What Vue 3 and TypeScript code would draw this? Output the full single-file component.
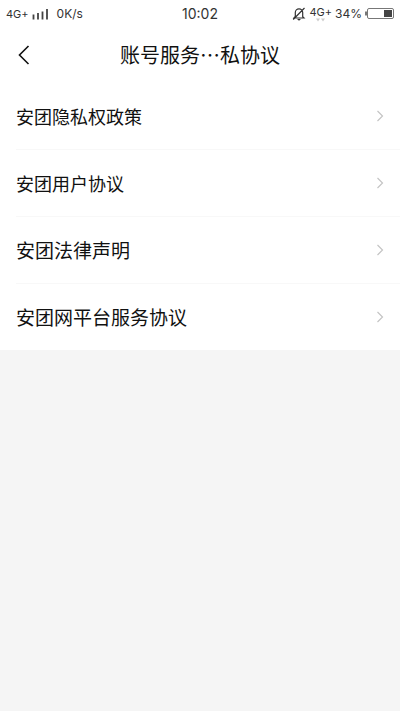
<script setup lang="ts">
interface Agreement {
  id: string
  title: string
  large?: boolean
}

const agreements: Agreement[] = [
  { id: 'privacy', title: '安团隐私权政策' },
  { id: 'user', title: '安团用户协议' },
  { id: 'legal', title: '安团法律声明', large: true },
  { id: 'platform', title: '安团网平台服务协议', large: true },
]
</script>

<template>
  <div class="page">
    <div class="status">
      <div class="status-side">
        <span class="network">4G+</span>
        <svg class="signal" width="17" height="12" viewBox="0 0 17 12" aria-hidden="true">
          <path d="M1.500 6.500v5M6 5v6.500M10.500 3.500v8M15 1v10.500" fill="none" stroke="#444" stroke-width="1.800" />
        </svg>
        <span class="speed">0K/s</span>
      </div>
      <time class="clock">10:02</time>
      <div class="status-side end">
        <svg class="bell" width="14" height="14" viewBox="0 0 14 14" aria-hidden="true">
          <path d="M3.300 9.500V5.500a3.700 3.700 0 0 1 7.400 0v4.200l1.300 1.300H2l1.300-1.500M12.500 1 1.200 12.500" fill="none" stroke="#333" stroke-width="1.200" />
          <path d="M5 12h4l-2 1.800z" fill="#333" />
        </svg>
        <span class="data">
          <span class="network">4G+</span>
          <svg width="10" height="4" viewBox="0 0 10 4" aria-hidden="true">
            <path d="M0 .5h4L2 3.500zM5 .5h4L7 3.500z" fill="#ccc" />
          </svg>
        </span>
        <span class="percent">34%</span>
        <svg class="battery" width="29" height="12" viewBox="0 0 29 12" aria-hidden="true">
          <rect x="2.500" y=".5" width="26" height="10" rx="1.500" fill="#fff" stroke="#777" />
          <path d="M1 3.500v4" stroke="#555" stroke-width="1.600" />
          <path d="M19 2h8v7h-8z" fill="#444" />
        </svg>
      </div>
    </div>

    <header class="header">
      <button class="back" type="button" aria-label="返回">
        <svg width="12" height="20" viewBox="0 0 12 20" aria-hidden="true">
          <path d="M10.500 1 1.500 10l9 9" fill="none" stroke="#111" stroke-width="1.600" />
        </svg>
      </button>
      <h1 class="title">账号服务…私协议</h1>
    </header>

    <nav class="list">
      <a v-for="item in agreements" :key="item.id" class="row" :href="`#${item.id}`">
        <span :class="['label', { large: item.large }]">{{ item.title }}</span>
        <svg width="8" height="12" viewBox="0 0 8 12" aria-hidden="true">
          <path d="M1.500 1l5 5-5 5" fill="none" stroke="#c4c4c4" stroke-width="1.200" />
        </svg>
      </a>
    </nav>
  </div>
</template>

<style>
body {
  background: #f5f5f5;
}
</style>

<style scoped>
.page {
  min-height: 100vh;
  background: #f5f5f5;
  color: #111;
  font-family: "Noto Sans CJK SC", sans-serif;
}

.status {
  display: grid;
  grid-template-columns: 1fr auto 1fr;
  align-items: center;
  height: 28px;
  padding: 0 6px;
  background: #fff;
  color: #333;
  font-family: Inter, "Liberation Sans", sans-serif;
  font-size: 12px;
  line-height: 16px;
}

.status-side {
  display: flex;
  align-items: center;
}

.end {
  justify-content: flex-end;
}

.network {
  font-size: 11px;
}

.signal {
  margin: 0 8px 0 3px;
}

.clock {
  font-size: 14px;
}

.bell {
  margin-right: 3px;
}

.data {
  display: flex;
  flex-direction: column;
  align-items: center;
  line-height: 12px;
  margin-right: 3px;
}

.percent {
  margin-right: 3px;
}

.header {
  box-sizing: border-box;
  display: grid;
  grid-template-columns: 48px 1fr 48px;
  align-items: center;
  height: 55px;
  padding-bottom: 2px;
  background: #fff;
}

.back {
  display: flex;
  justify-content: center;
  padding: 8px 0;
  border: 0;
  background: none;
}

.title {
  margin: 0;
  font-size: 20px;
  font-weight: 400;
  line-height: 28px;
  text-align: center;
}

.list {
  background: #fff;
}

.row {
  display: flex;
  align-items: center;
  justify-content: space-between;
  height: 66px;
  margin-left: 16px;
  padding-right: 16px;
  border-bottom: 1px solid #f8f8f8;
  color: inherit;
  text-decoration: none;
}

.row:last-child {
  border-bottom: 0;
}

.label {
  font-size: 18px;
  line-height: 28px;
}

.large {
  font-size: 19px;
}
</style>
